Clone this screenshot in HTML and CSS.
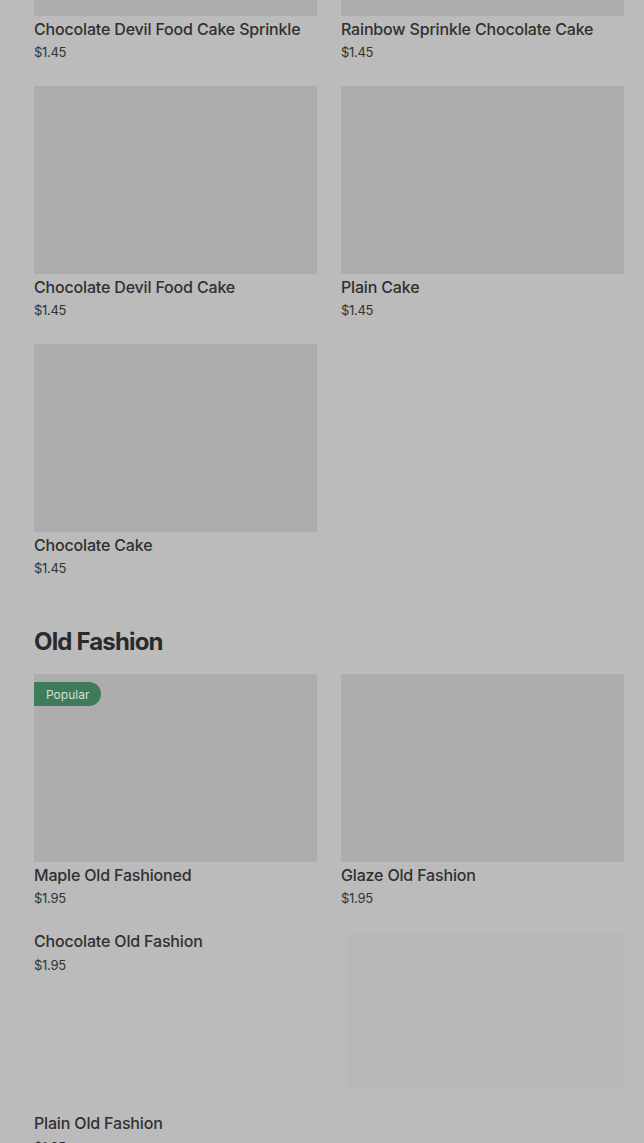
FILE: index.html
```html
<!DOCTYPE html>
<html>
<head>
<meta charset="utf-8">
<link rel="stylesheet" href="styles.css">
</head>
<body>
<div class="page">
  <section class="section">
    <div class="grid">
      <div class="item"><div class="thumb"></div><div class="name">Chocolate Devil Food Cake Sprinkle</div><div class="price">$1.45</div></div>
      <div class="item"><div class="thumb"></div><div class="name">Rainbow Sprinkle Chocolate Cake</div><div class="price">$1.45</div></div>
      <div class="item"><div class="thumb"></div><div class="name">Chocolate Devil Food Cake</div><div class="price">$1.45</div></div>
      <div class="item"><div class="thumb"></div><div class="name">Plain Cake</div><div class="price">$1.45</div></div>
      <div class="item"><div class="thumb"></div><div class="name">Chocolate Cake</div><div class="price">$1.45</div></div>
    </div>
  </section>
  <section class="section">
    <h2 class="heading">Old Fashion</h2>
    <div class="grid">
      <div class="item"><div class="thumb"><span class="badge">Popular</span></div><div class="name">Maple Old Fashioned</div><div class="price">$1.95</div></div>
      <div class="item"><div class="thumb"></div><div class="name">Glaze Old Fashion</div><div class="price">$1.95</div></div>
      <div class="row-item">
        <div class="row-text"><div class="name">Chocolate Old Fashion</div><div class="price price-row">$1.95</div></div>
        <div class="row-thumb"></div>
      </div>
      <div class="row-item row-last">
        <div class="row-text"><div class="name">Plain Old Fashion</div><div class="price price-row">$1.95</div></div>
      </div>
    </div>
  </section>
</div>
</body>
</html>
```
FILE: styles.css
```css
html, body {
  margin: 0;
  padding: 0;
  background: #bbbbbb;
  overflow: hidden;
}
body {
  font-family: "Inter", "Liberation Sans", sans-serif;
  color: #2f2f2f;
}
.page {
  margin-top: -172px;
  padding: 0 20px 0 34px;
}
.grid {
  display: grid;
  grid-template-columns: 1fr 1fr;
  column-gap: 24px;
  row-gap: 25px;
}
.item {
  display: flex;
  flex-direction: column;
}
.thumb {
  position: relative;
  height: 188px;
  background: #adadad;
}
.name {
  margin-top: 3px;
  font-size: 16px;
  line-height: 20px;
  font-weight: 500;
  letter-spacing: -0.17px;
  color: #303030;
  white-space: nowrap;
}
.price {
  margin-top: 4px;
  font-size: 13px;
  line-height: 18px;
  letter-spacing: -0.3px;
  color: #333;
}
.heading {
  margin: 49px 0 16px;
  font-size: 24px;
  line-height: 32px;
  font-weight: 700;
  letter-spacing: -0.85px;
  color: #2a2a2a;
}
.badge {
  position: absolute;
  left: 0;
  top: 8px;
  height: 24px;
  padding: 0 12px;
  display: flex;
  align-items: center;
  font-size: 12px;
  color: #d2e2d8;
  background: #3d7b5b;
  border-radius: 0 12px 12px 0;
}
.row-item {
  grid-column: 1 / -1;
  display: flex;
  justify-content: space-between;
  align-items: flex-start;
  margin-top: -1px;
}
.row-text .name {
  margin-top: 0;
}
.price-row {
  margin-top: 5px;
}
.row-thumb {
  width: 276px;
  height: 154px;
  margin-top: 2px;
  background: #b8b8b8;
  box-shadow: 0 1px 2px rgba(0,0,0,0.05);
}
.row-last {
  margin-top: 1px;
}
```
